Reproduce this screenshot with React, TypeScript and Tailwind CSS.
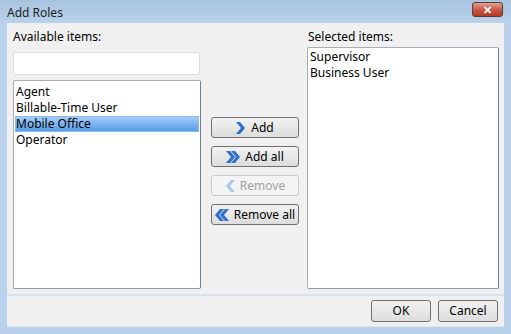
import React from "react";

const font = { fontFamily: '"Noto Sans", "Open Sans", sans-serif' };

// chevron arrows drawn for the move buttons
const Chevron = ({ dir, double, disabled }: { dir: "left" | "right"; double?: boolean; disabled?: boolean }) => {
  const c = disabled ? "#a9c8ea" : "#2c6fcc";
  const one = "0,0 4,0 9,6 4,12 0,12 5,6";
  return (
    <svg width={double ? 14 : 10} height="12" viewBox={double ? "0 0 14 12" : "0 0 10 12"} className={dir === "left" ? "-scale-x-100" : ""}>
      <polygon points={one} fill={c} />
      {double && <polygon points={one} fill={c} transform="translate(5,0)" />}
    </svg>
  );
};

const MoveButton = ({ label, dir, double, disabled }: { label: string; dir: "left" | "right"; double?: boolean; disabled?: boolean }) => (
  <button
    className={`w-[88px] h-[21px] rounded-[3px] border flex items-center justify-center gap-[5px] text-[12px] ${
      disabled ? "border-[#c9c9c9] bg-[#f4f4f4] text-[#a0a0a0]" : "border-[#707070] bg-gradient-to-b from-[#f2f2f2] to-[#dddddd] text-black"
    }`}
  >
    <Chevron dir={dir} double={double} disabled={disabled} />
    <span>{label}</span>
  </button>
);

const DlgButton = ({ label }: { label: string }) => (
  <button className="w-[60px] h-[22px] rounded-[3px] border border-[#707070] bg-gradient-to-b from-[#f2f2f2] to-[#dddddd] text-[12px] text-black">
    {label}
  </button>
);

export default function App() {
  const available = ["Agent", "Billable-Time User", "Mobile Office", "Operator"];
  const selected = ["Supervisor", "Business User"];

  return (
    <div className="w-[511px] h-[334px] bg-[#b9d1ea] flex flex-col overflow-hidden" style={font}>
      {/* Title bar */}
      <div className="h-[23px] flex items-start justify-between pl-[7px] pr-[8px] bg-gradient-to-b from-[#a9c4df] to-[#b9d1ea]">
        <span className="text-[12px] text-[#1e1e1e] mt-[4px]">Add Roles</span>
        <div className="mt-[2px] w-[31px] h-[15px] rounded-[3px] border border-[#5a3b38] bg-gradient-to-b from-[#e0a297] via-[#c75a48] to-[#b8361f] flex items-center justify-center">
          <span className="text-white text-[11px] font-bold leading-none">✕</span>
        </div>
      </div>

      {/* Client */}
      <div className="flex-1 mx-[7px] mb-[7px] bg-[#f0f0f0] flex flex-col border-b border-[#dbe8f3]">
        <div className="h-[271px] flex pl-[6px] pr-[5px]">
          {/* Available */}
          <div className="w-[188px] flex flex-col pt-[6px]">
            <div className="text-[12px] text-black h-[16px] leading-[16px]">Available items:</div>
            <div className="mt-[7px] w-[187px] h-[23px] bg-white border border-[#dcdde0] rounded-[2px]" />
            <div className="mt-[5px] h-[209px] bg-white border border-[#abadb3] border-b-[#8e9aa6] border-r-[#6d7f90] rounded-[2px] pt-[3px] px-[1px]">
              {available.map((it) => (
                <div
                  key={it}
                  className={`h-[16px] leading-[16px] px-[1px] text-[12px] text-black ${
                    it === "Mobile Office" ? "bg-gradient-to-b from-[#a9cff5] to-[#4f9ae9] shadow-[inset_0_0_0_1px_#8dbbe8] rounded-[1px]" : ""
                  }`}
                >
                  {it}
                </div>
              ))}
            </div>
          </div>

          {/* Buttons */}
          <div className="ml-[10px] w-[88px] flex flex-col gap-[8px] pt-[94px]">
            <MoveButton label="Add" dir="right" />
            <MoveButton label="Add all" dir="right" double />
            <MoveButton label="Remove" dir="left" disabled />
            <MoveButton label="Remove all" dir="left" double />
          </div>

          {/* Selected */}
          <div className="ml-[8px] flex-1 flex flex-col pt-[6px]">
            <div className="text-[12px] text-black h-[16px] leading-[16px] pl-[1px]">Selected items:</div>
            <div className="mt-[2px] h-[242px] bg-white border border-[#abadb3] border-b-[#8e9aa6] border-r-[#6d7f90] rounded-[2px] pt-[1px] px-[1px]">
              {selected.map((it) => (
                <div key={it} className="h-[16px] leading-[16px] px-[1px] text-[12px] text-black">
                  {it}
                </div>
              ))}
            </div>
          </div>
        </div>

        {/* Footer */}
        <div className="h-[2px] bg-[#d2e5f0]" />
        <div className="flex-1 flex items-start justify-end gap-[7px] pt-[4px] pr-[6px]">
          <DlgButton label="OK" />
          <DlgButton label="Cancel" />
        </div>
      </div>
    </div>
  );
}
